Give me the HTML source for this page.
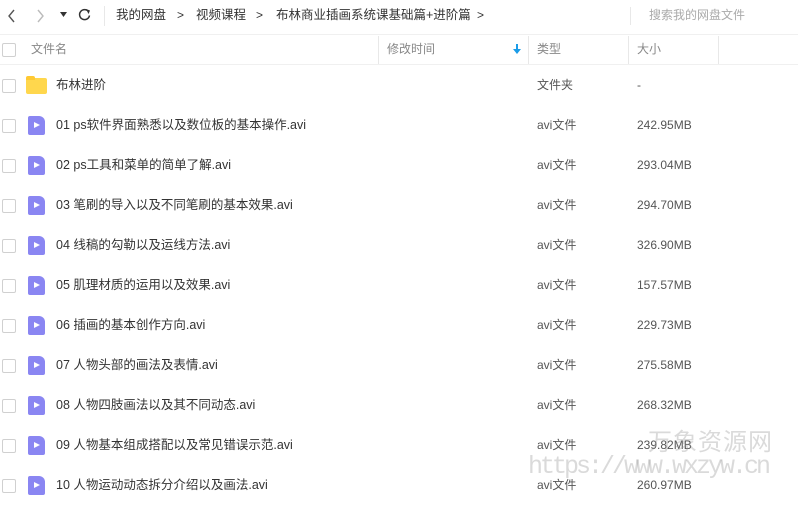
<!DOCTYPE html>
<html><head><meta charset="utf-8"><style>
body{margin:0;width:798px;height:502px;overflow:hidden;background:#fff;font-family:"Liberation Sans","Noto Sans CJK SC",sans-serif;font-size:12px;color:#555;position:relative}
.top{position:absolute;left:0;top:0;width:798px;height:34px;border-bottom:1px solid #f0f0f0}
.t{position:absolute;white-space:nowrap;line-height:16px}
.hdr{position:absolute;left:0;top:35px;width:798px;height:29px;border-bottom:1px solid #f0f0f0;color:#888}
.vl{position:absolute;width:1px;background:#e8e8e8}
.cb{position:absolute;left:2px;width:12px;height:12px;border:1px solid #d0d0d0;border-radius:2px;background:#fff}
.row{position:absolute;left:0;width:798px;height:40px}
.n{left:56px;top:12px;color:#333;font-size:12.5px}
.ty{left:537px;top:12px}
.sz{left:637px;top:12px}
.vid{position:absolute;left:28px;top:11px;width:17px;height:19px;background:#8a86f2;border-radius:2px 6px 2px 2px}
.vid:after{content:"";position:absolute;left:6px;top:6px;border-left:6px solid #fff;border-top:3.5px solid transparent;border-bottom:3.5px solid transparent}
.fold{position:absolute;left:26px;width:21px;height:16px;background:#ffd74d;border-radius:2px}
.fold:before{content:"";position:absolute;left:0;top:-2px;width:9px;height:4px;background:#ffc933;border-radius:2px 2px 0 0}
</style></head><body>
<div class="top">
<svg class="t" style="left:6px;top:8px" width="12" height="16"><path d="M8 2 L3 8 L8 14" stroke="#555" stroke-width="1.4" fill="none"/></svg>
<svg class="t" style="left:35px;top:8px" width="12" height="16"><path d="M3 2 L8 8 L3 14" stroke="#bbb" stroke-width="1.4" fill="none"/></svg>
<svg class="t" style="left:60px;top:12px" width="8" height="6"><path d="M0 0 L7 0 L3.5 5Z" fill="#333"/></svg>
<svg class="t" style="left:77px;top:7px" width="15" height="15"><path d="M11.5 4.5 A5 5 0 1 0 12.5 8.5" stroke="#333" stroke-width="1.5" fill="none"/><path d="M9 2 L13 3.5 L11.5 7Z" fill="#333"/></svg>
<div class="vl" style="left:104px;top:6px;height:20px"></div>
<div class="t" style="left:116px;top:7px;color:#333;font-size:12.5px">我的网盘</div>
<div class="t" style="left:177px;top:7px;color:#333">&gt;</div>
<div class="t" style="left:196px;top:7px;color:#333;font-size:12.5px">视频课程</div>
<div class="t" style="left:256px;top:7px;color:#333">&gt;</div>
<div class="t" style="left:276px;top:7px;color:#333;font-size:12.5px">布林商业插画系统课基础篇+进阶篇</div>
<div class="t" style="left:477px;top:7px;color:#333">&gt;</div>
<div class="vl" style="left:630px;top:7px;height:18px"></div>
<div class="t" style="left:649px;top:7px;color:#aaa">搜索我的网盘文件</div>
</div>
<div class="hdr">
<div class="cb" style="top:8px"></div>
<div class="t" style="left:31px;top:6px">文件名</div>
<div class="vl" style="left:378px;top:1px;height:28px"></div>
<div class="t" style="left:387px;top:6px">修改时间</div>
<svg class="t" style="left:513px;top:9px" width="8" height="11"><path d="M4 0V8" stroke="#1a9ce8" stroke-width="2"/><path d="M0 5 L4 10 L8 5Z" fill="#1a9ce8"/></svg>
<div class="vl" style="left:528px;top:1px;height:28px"></div>
<div class="t" style="left:537px;top:6px">类型</div>
<div class="vl" style="left:628px;top:1px;height:28px"></div>
<div class="t" style="left:637px;top:6px">大小</div>
<div class="vl" style="left:718px;top:1px;height:28px"></div>
</div>
<div class="row" style="top:65px"><div class="cb" style="top:14px"></div><div class="fold" style="top:13px"></div><div class="t n">布林进阶</div><div class="t ty">文件夹</div><div class="t sz">-</div></div>
<div class="row" style="top:105px"><div class="cb" style="top:14px"></div><div class="vid"></div><div class="t n">01 ps软件界面熟悉以及数位板的基本操作.avi</div><div class="t ty">avi文件</div><div class="t sz">242.95MB</div></div>
<div class="row" style="top:145px"><div class="cb" style="top:14px"></div><div class="vid"></div><div class="t n">02 ps工具和菜单的简单了解.avi</div><div class="t ty">avi文件</div><div class="t sz">293.04MB</div></div>
<div class="row" style="top:185px"><div class="cb" style="top:14px"></div><div class="vid"></div><div class="t n">03 笔刷的导入以及不同笔刷的基本效果.avi</div><div class="t ty">avi文件</div><div class="t sz">294.70MB</div></div>
<div class="row" style="top:225px"><div class="cb" style="top:14px"></div><div class="vid"></div><div class="t n">04 线稿的勾勒以及运线方法.avi</div><div class="t ty">avi文件</div><div class="t sz">326.90MB</div></div>
<div class="row" style="top:265px"><div class="cb" style="top:14px"></div><div class="vid"></div><div class="t n">05 肌理材质的运用以及效果.avi</div><div class="t ty">avi文件</div><div class="t sz">157.57MB</div></div>
<div class="row" style="top:305px"><div class="cb" style="top:14px"></div><div class="vid"></div><div class="t n">06 插画的基本创作方向.avi</div><div class="t ty">avi文件</div><div class="t sz">229.73MB</div></div>
<div class="row" style="top:345px"><div class="cb" style="top:14px"></div><div class="vid"></div><div class="t n">07 人物头部的画法及表情.avi</div><div class="t ty">avi文件</div><div class="t sz">275.58MB</div></div>
<div class="row" style="top:385px"><div class="cb" style="top:14px"></div><div class="vid"></div><div class="t n">08 人物四肢画法以及其不同动态.avi</div><div class="t ty">avi文件</div><div class="t sz">268.32MB</div></div>
<div class="row" style="top:425px"><div class="cb" style="top:14px"></div><div class="vid"></div><div class="t n">09 人物基本组成搭配以及常见错误示范.avi</div><div class="t ty">avi文件</div><div class="t sz">239.82MB</div></div>
<div class="row" style="top:465px"><div class="cb" style="top:14px"></div><div class="vid"></div><div class="t n">10 人物运动动态拆分介绍以及画法.avi</div><div class="t ty">avi文件</div><div class="t sz">260.97MB</div></div>
<div class="t" style="left:648px;top:430px;font-size:24px;line-height:26px;color:rgba(150,150,150,0.35);letter-spacing:1px">万象资源网</div>
<div class="t" style="left:528px;top:453px;font-family:'Liberation Mono',monospace;font-size:25px;line-height:28px;color:rgba(150,150,150,0.35);letter-spacing:-3px">https://www.wxzyw.cn</div>
</body></html>
